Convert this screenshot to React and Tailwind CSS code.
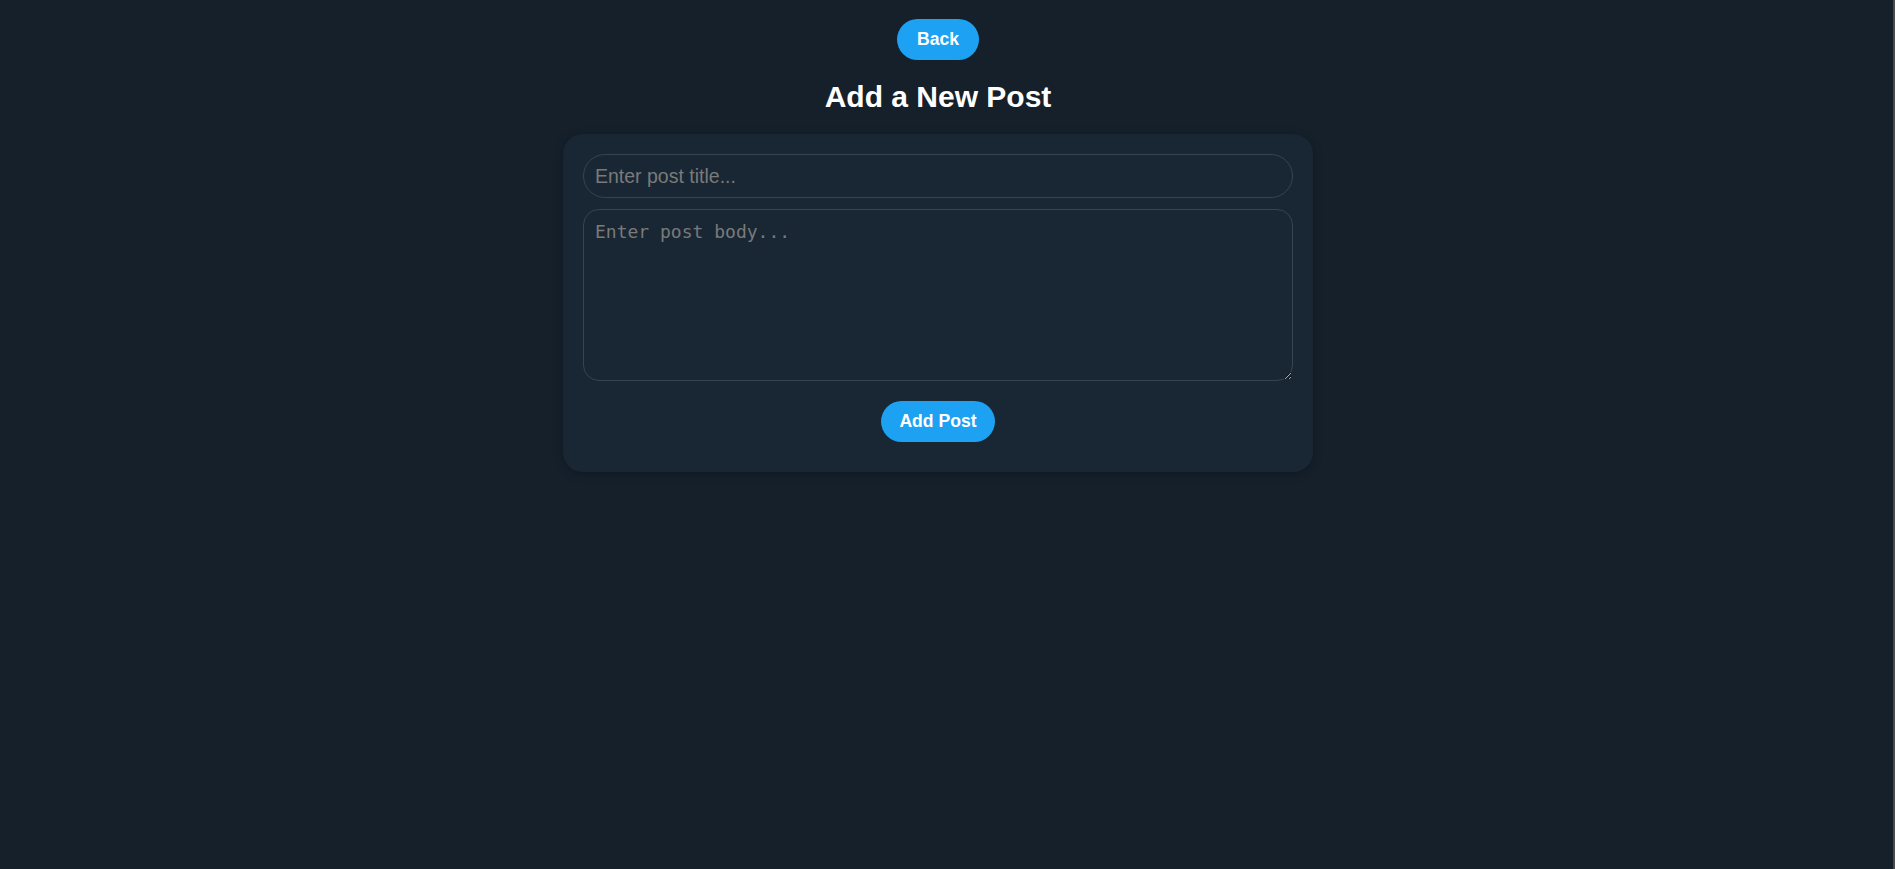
import React from "react";

export default function App() {
  return (
    <div className="min-h-screen w-full bg-[#15202b] flex" style={{ fontFamily: '"Liberation Sans", Arial, sans-serif' }}>
      <main className="flex-1 flex flex-col items-center pt-[19px]">
        <button className="rounded-full bg-[#1da1f2] px-5 py-[10px] text-[17.6px] leading-[21px] font-bold text-white">
          Back
        </button>
        <h2 className="mt-[19px] text-[30px] leading-[35px] font-bold text-white">Add a New Post</h2>
        <form
          className="mt-5 w-[750px] rounded-[20px] bg-[#192734] px-5 pt-5 pb-[30px] flex flex-col items-center shadow-[0_2px_10px_rgba(0,0,0,0.25)]"
          onSubmit={(e) => e.preventDefault()}
        >
          <input
            type="text"
            placeholder="Enter post title..."
            className="w-full h-[44px] rounded-full border border-[#38444d] bg-[#192734] px-[11px] text-[19.5px] text-white placeholder:text-[#7a7a7a] outline-none"
            style={{ fontFamily: '"Liberation Sans", Arial, sans-serif' }}
          />
          <textarea
            placeholder="Enter post body..."
            className="mt-[11px] w-full h-[172px] rounded-[16px] border border-[#38444d] bg-[#192734] px-[11px] py-[11px] text-[18px] leading-[22px] text-white placeholder:text-[#7a7a7a] outline-none"
            style={{ fontFamily: '"DejaVu Sans Mono", monospace' }}
          />
          <button
            type="submit"
            className="mt-5 rounded-full bg-[#1da1f2] px-[18px] py-[10px] text-[17.6px] leading-[21px] font-bold text-white"
          >
            Add Post
          </button>
        </form>
      </main>
      <div className="w-[19px] flex justify-end">
        <div className="w-[2px] bg-[#4a4a4a]" />
      </div>
    </div>
  );
}
